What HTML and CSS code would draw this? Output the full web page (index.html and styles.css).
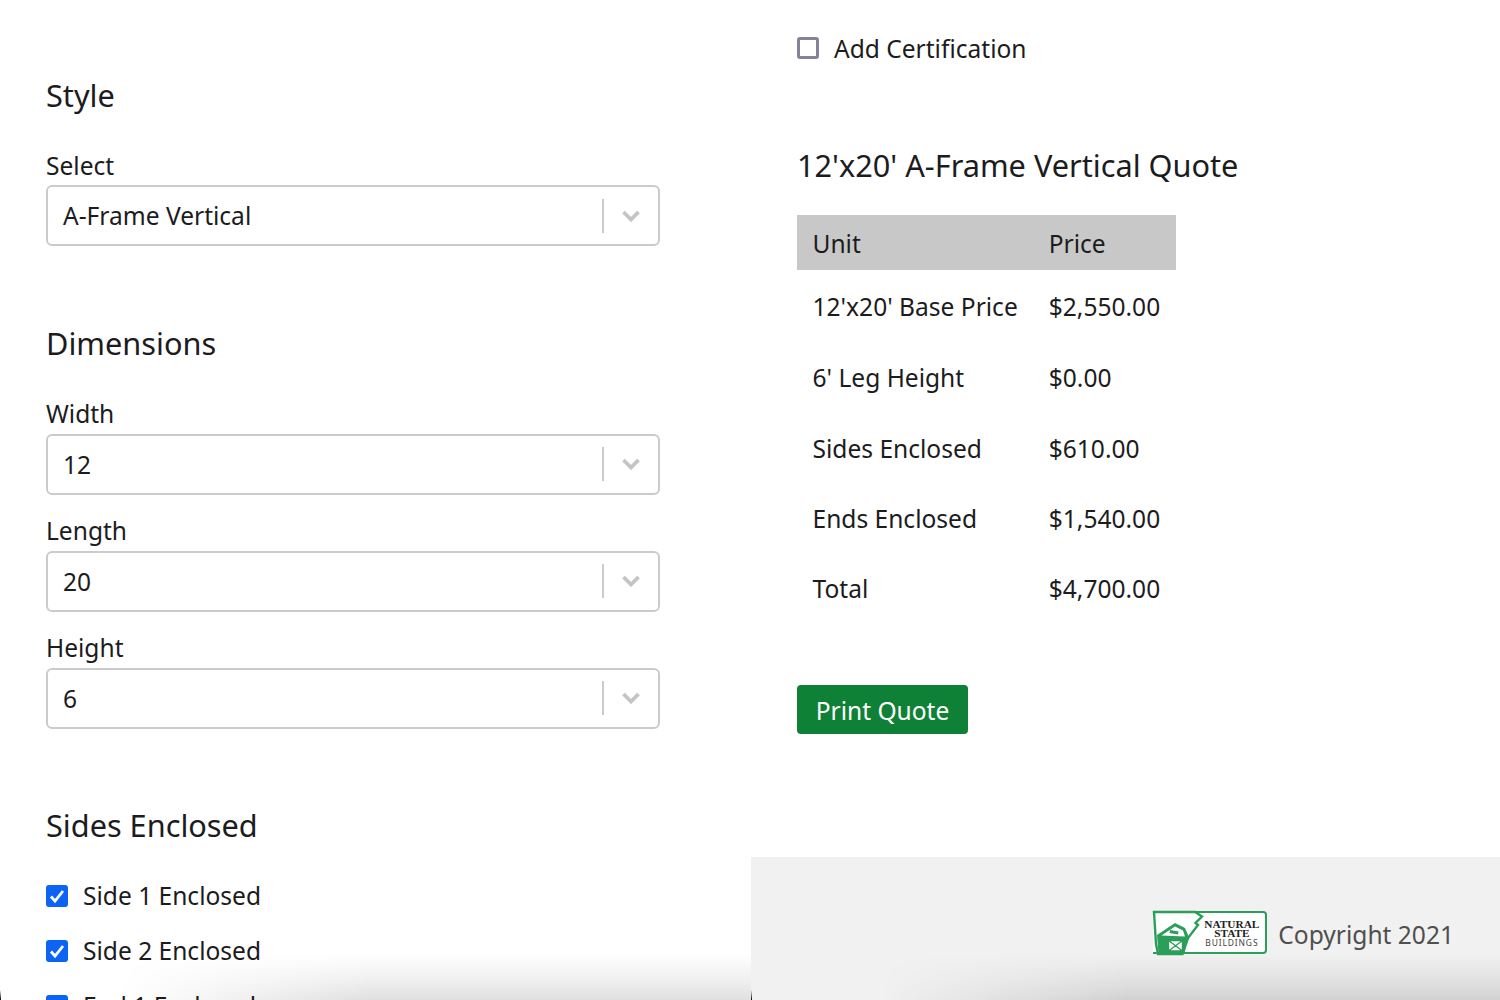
FILE: index.html
```html
<!DOCTYPE html>
<html lang="en">
<head>
<meta charset="utf-8">
<title>Quote</title>
<link rel="stylesheet" href="styles.css">
</head>
<body>
<div class="page">
  <main class="left">
    <section class="group style-group">
      <h2>Style</h2>
      <div class="field">
        <label>Select</label>
        <div class="select"><span class="value">A-Frame Vertical</span><span class="sep"></span><svg class="chev" viewBox="0 0 18 12"><path d="M1.5 2L9 9.5 16.5 2" /></svg></div>
      </div>
    </section>
    <section class="group">
      <h2>Dimensions</h2>
      <div class="field">
        <label>Width</label>
        <div class="select"><span class="value">12</span><span class="sep"></span><svg class="chev" viewBox="0 0 18 12"><path d="M1.5 2L9 9.5 16.5 2" /></svg></div>
      </div>
      <div class="field">
        <label>Length</label>
        <div class="select"><span class="value">20</span><span class="sep"></span><svg class="chev" viewBox="0 0 18 12"><path d="M1.5 2L9 9.5 16.5 2" /></svg></div>
      </div>
      <div class="field">
        <label>Height</label>
        <div class="select"><span class="value">6</span><span class="sep"></span><svg class="chev" viewBox="0 0 18 12"><path d="M1.5 2L9 9.5 16.5 2" /></svg></div>
      </div>
    </section>
    <section class="group">
      <h2>Sides Enclosed</h2>
      <div class="checks">
        <div class="check"><span class="box on"><svg viewBox="0 0 22 22"><path d="M5 11.5l4 4.5 8-10" /></svg></span>Side 1 Enclosed</div>
        <div class="check"><span class="box on"><svg viewBox="0 0 22 22"><path d="M5 11.5l4 4.5 8-10" /></svg></span>Side 2 Enclosed</div>
        <div class="check"><span class="box on"><svg viewBox="0 0 22 22"><path d="M5 11.5l4 4.5 8-10" /></svg></span>End 1 Enclosed</div>
      </div>
    </section>
  </main>
  <aside class="right">
    <div class="right-body">
      <div class="check cert"><span class="box off"></span>Add Certification</div>
      <h2 class="quote-title">12'x20' A-Frame Vertical Quote</h2>
      <table class="quote">
        <thead><tr><th>Unit</th><th>Price</th></tr></thead>
        <tbody>
          <tr><td>12'x20' Base Price</td><td>$2,550.00</td></tr>
          <tr><td>6' Leg Height</td><td>$0.00</td></tr>
          <tr><td>Sides Enclosed</td><td>$610.00</td></tr>
          <tr><td>Ends Enclosed</td><td>$1,540.00</td></tr>
          <tr><td>Total</td><td>$4,700.00</td></tr>
        </tbody>
      </table>
      <button class="print">Print Quote</button>
    </div>
    <footer class="foot">
      <div class="logo">
        <svg class="state" viewBox="0 0 50 44">
          <path class="state-line" d="M1 1H42L49 5.5 42.5 12 45 14 35 27 29.5 43H5L3 33Z"/>
          <path class="barn" d="M4 24L22 12 32 17 35.5 25 31 43H5.5Z"/>
          <path class="barn-roof" d="M8.5 24.5L22 15.5 30 19.5 32 25.5Z"/>
          <path class="barn-win" d="M17 19L25.5 20.5 25 23.5 16.5 22Z"/>
          <path class="barn-door" d="M15.5 29.5H29.5V40H15.5ZM15.5 29.5L29.5 40M29.5 29.5L15.5 40"/>
        </svg>
        <div class="logo-text"><b>NATURAL</b><b>STATE</b><span>BUILDINGS</span></div>
      </div>
      <span class="copy">Copyright 2021</span>
    </footer>
  </aside>
  <div class="shade shade-left"></div>
  <div class="shade shade-right"></div>
  <div class="tick tick-left"></div>
  <div class="tick tick-mid"></div>
</div>
</body>
</html>
```
FILE: styles.css
```css
* { box-sizing: border-box; }
html, body { margin: 0; height: 100%; overflow: hidden; background: #fff; }
body { font-family: "Noto Sans", "Open Sans", sans-serif; color: #1c1c1e; font-size: 24.55px; }
.page { position: relative; display: flex; width: 1500px; height: 1000px; overflow: hidden; }
.left { width: 751px; padding: 0 91px 0 46px; flex: none; }
.right { flex: 1; display: flex; flex-direction: column; min-width: 0; }
.right-body { flex: 1; padding: 0 46px; height: 857px; }
h2 { font-weight: 400; font-size: 30.7px; line-height: 42px; margin: 0; }
.group { padding-top: 55.2px; }
.style-group { padding-top: 73.9px; }
.group h2 { margin-bottom: 34px; }
.field { margin-bottom: 20.5px; }
.field label { display: block; line-height: 32px; height: 32px; }
.select { display: flex; align-items: center; height: 61px; border: 2px solid #cbcbcb; border-radius: 6px; padding-left: 15px; background: #fff; margin-top: 3.5px; }
.value { flex: 1; line-height: 32px; padding-top: 1px; }
.sep { width: 2px; height: 34px; background: #cbcbcb; }
.chev { width: 18px; height: 12px; margin: 0 18px; fill: none; stroke: #c4c4c4; stroke-width: 3.8; }
.checks { margin-top: -12px; }
.check { display: flex; align-items: center; height: 55px; }
.box { width: 22px; height: 22px; border-radius: 3px; margin-right: 15px; flex: none; }
.box.on { background: #0d63f3; }
.box.on svg { display: block; width: 22px; height: 22px; fill: none; stroke: #fff; stroke-width: 2.8; }
.box.off { border: 3px solid #85839a; border-radius: 3px; }
.cert { height: 32px; margin-top: 32px; }
.quote-title { margin-top: 80px; }
.quote { margin-top: 29px; border-collapse: collapse; }
.quote th { background: #c8c8c8; font-weight: 400; text-align: left; height: 55px; padding: 2px 15.5px 0; }
.quote td { height: 70.4px; padding: 0 15.5px; white-space: nowrap; }
.quote tbody tr:first-child td { height: 72.5px; padding-top: 0; }
.print { display: block; margin-top: 61px; width: 171px; height: 49px; background: #0f8136; color: #fff; border: 0; border-radius: 4px; font: inherit; padding: 2px 0 0; }
.foot { height: 143px; flex: none; background: #f1f1f1; display: flex; align-items: flex-start; justify-content: flex-end; padding: 50px 46px 0 0; color: #4f4f4f; }
.logo { display: flex; width: 114px; height: 43px; margin: 4px 11px 0 0; border: 2px solid #2b9e58; border-left: 0; border-radius: 0 4px 4px 0; background: #fff; }
.state { width: 50px; height: 44px; flex: none; margin: -2px 0 0 0; overflow: visible; }
.state-line { fill: #fff; stroke: #2b9e58; stroke-width: 2.4; }
.barn { fill: #2b9e58; }
.barn-roof { fill: #fff; }
.barn-win { fill: #2b9e58; }
.barn-door { fill: #fff; stroke: #2b9e58; stroke-width: 1.4; }
.logo-text { flex: 1; display: flex; flex-direction: column; align-items: center; justify-content: center; color: #222; padding: 3px 5px 0 0; }
.logo-text b { font-family: "Liberation Serif", serif; font-size: 11.3px; line-height: 9px; }
.logo-text span { font-size: 8.5px; line-height: 9.5px; letter-spacing: .85px; color: #444; }
.copy { line-height: 32px; margin-top: 12px; }
.shade { position: absolute; bottom: 0; height: 46px; pointer-events: none; }
.shade-left { left: 120px; width: 631px; background: linear-gradient(to top, rgba(0,0,0,.12), rgba(0,0,0,.06) 45%, rgba(0,0,0,0)); -webkit-mask-image: linear-gradient(to right, transparent, #000 40%); mask-image: linear-gradient(to right, transparent, #000 40%); }
.shade-right { left: 880px; width: 620px; background: linear-gradient(to top, rgba(0,0,0,.13), rgba(0,0,0,.06) 45%, rgba(0,0,0,0)); -webkit-mask-image: linear-gradient(to right, transparent, #000 40%); mask-image: linear-gradient(to right, transparent, #000 40%); }
.tick { position: absolute; bottom: 0; width: 1px; height: 10px; background: linear-gradient(to bottom, rgba(0,0,0,0), #000); }
.tick-left { left: 0; }
.tick-mid { left: 751px; }
```
